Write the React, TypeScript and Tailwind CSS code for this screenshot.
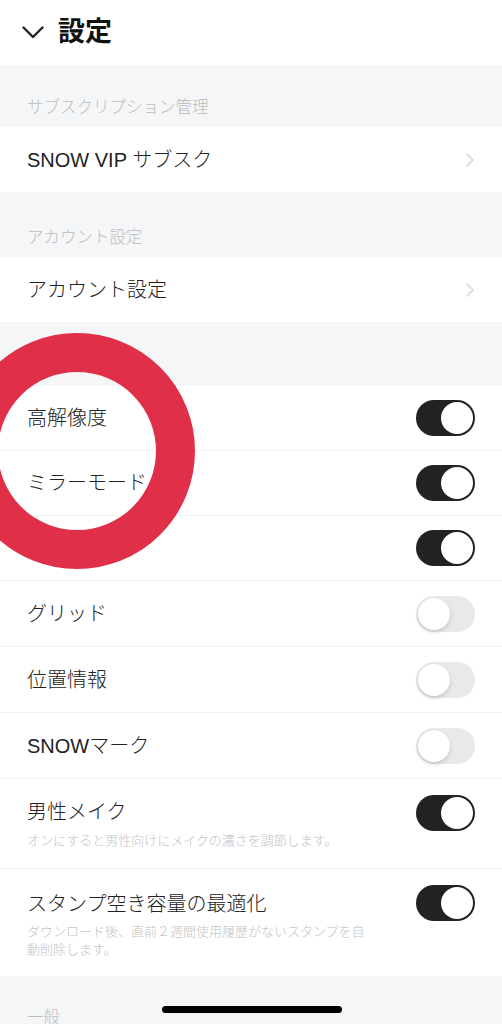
import React from "react";

const font = { fontFamily: '"Liberation Sans", "Noto Sans CJK JP", sans-serif' };

function Toggle({ on }: { on: boolean }) {
  return on ? (
    <div className="w-[59px] h-[36px] rounded-full bg-[#222222] relative shrink-0">
      <div className="absolute right-[2px] top-[2px] w-[32px] h-[32px] rounded-full bg-white" />
    </div>
  ) : (
    <div className="w-[59px] h-[36px] rounded-full bg-[#e9e9eb] relative shrink-0">
      <div className="absolute left-[2px] top-[2px] w-[32px] h-[32px] rounded-full bg-white shadow-[0_2px_4px_rgba(0,0,0,0.16)]" />
    </div>
  );
}

function Chevron() {
  return (
    <svg width="10" height="16" viewBox="0 0 10 16" className="shrink-0">
      <path d="M2 2 L8 8 L2 14" fill="none" stroke="#d6d6d6" strokeWidth="1.6" strokeLinecap="round" strokeLinejoin="round" />
    </svg>
  );
}

function SectionLabel({ text, h }: { text: string; h: string }) {
  return (
    <div className={`bg-[#f5f6f7] ${h} flex items-end px-[27px] pb-[12px]`}>
      <span className="text-[16.5px] font-light text-[#bdbdbd] leading-none">{text}</span>
    </div>
  );
}

function LinkRow({ text }: { text: string }) {
  return (
    <div className="h-[65px] bg-white flex items-center justify-between pl-[27px] pr-[27px]">
      <span className="text-[20px] font-light text-[#222] leading-none">{text}</span>
      <Chevron />
    </div>
  );
}

function ToggleRow({ text, on, h = "h-[66px]" }: { text: string; on: boolean; h?: string }) {
  return (
    <div className={`${h} bg-white flex items-center justify-between pl-[27px] pr-[27px] border-b border-[#f2f2f2]`}>
      <span className="text-[20px] font-light text-[#222] leading-none">{text}</span>
      <Toggle on={on} />
    </div>
  );
}

export default function App() {
  return (
    <div className="w-[502px] h-[1024px] overflow-hidden bg-[#f5f6f7] relative" style={font}>
      <div className="h-[65px] bg-white flex items-center pl-[22px] gap-[14px]">
        <svg width="22" height="13" viewBox="0 0 22 13">
          <path d="M1.5 1.5 L11 11 L20.5 1.5" fill="none" stroke="#222" strokeWidth="2.4" strokeLinecap="round" strokeLinejoin="round" />
        </svg>
        <span className="text-[27px] font-bold text-[#111] leading-none">設定</span>
      </div>

      <SectionLabel text="サブスクリプション管理" h="h-[62px]" />
      <LinkRow text="SNOW VIP サブスク" />
      <SectionLabel text="アカウント設定" h="h-[65px]" />
      <LinkRow text="アカウント設定" />
      <SectionLabel text="" h="h-[64px]" />

      <ToggleRow text="高解像度" on h="h-[65px]" />
      <ToggleRow text="ミラーモード" on h="h-[65px]" />
      <ToggleRow text="" on h="h-[65px]" />
      <ToggleRow text="グリッド" on={false} />
      <ToggleRow text="位置情報" on={false} />
      <ToggleRow text="SNOWマーク" on={false} />

      <div className="h-[90px] bg-white flex items-start justify-between pl-[27px] pr-[27px] border-b border-[#f2f2f2] pt-[16px]">
        <div className="flex flex-col">
          <span className="text-[20px] font-light text-[#222] leading-none mt-[7px]">男性メイク</span>
          <span className="text-[13px] font-light text-[#c4c4c4] leading-none mt-[12px]">オンにすると男性向けにメイクの濃さを調節します。</span>
        </div>
        <Toggle on />
      </div>

      <div className="h-[107px] bg-white flex items-start justify-between pl-[27px] pr-[27px] pt-[16px]">
        <div className="flex flex-col">
          <span className="text-[20px] font-light text-[#222] leading-none mt-[9px]">スタンプ空き容量の最適化</span>
          <span className="text-[13px] font-light text-[#c4c4c4] leading-[18px] mt-[9px] w-[345px]">ダウンロード後、直前２週間使用履歴がないスタンプを自動削除します。</span>
        </div>
        <Toggle on />
      </div>

      <div className="h-[60px] flex items-start px-[27px] pt-[33px]">
        <span className="text-[16.5px] font-light text-[#bdbdbd] leading-none">一般</span>
      </div>

      <div className="absolute left-[-41px] top-[333px] w-[236px] h-[236px] rounded-full border-[39px] border-[#e02f48]" />
      <div className="absolute left-[162px] top-[1006px] w-[180px] h-[7px] rounded-full bg-black" />
    </div>
  );
}
